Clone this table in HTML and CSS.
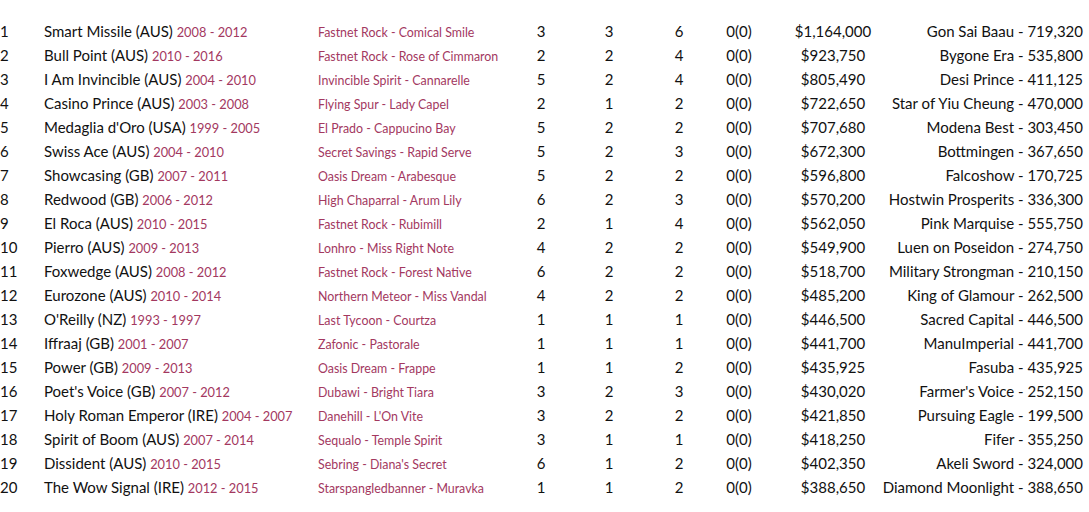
FILE: index.html
```html
<!DOCTYPE html>
<html lang="en">
<head>
<meta charset="utf-8">
<title>Leading Sires</title>
<link rel="stylesheet" href="styles.css">
</head>
<body>
<div class="table">
  <div class="row"><div class="rank">1</div><div class="name">Smart Missile (AUS) <span class="years">2008 - 2012</span></div><div class="sire">Fastnet Rock - Comical Smile</div><div class="num">3</div><div class="num">3</div><div class="num">6</div><div class="num">0(0)</div><div class="num">$1,164,000</div><div class="best"><span>Gon Sai Baau - 719,320</span></div></div>
  <div class="row"><div class="rank">2</div><div class="name">Bull Point (AUS) <span class="years">2010 - 2016</span></div><div class="sire">Fastnet Rock - Rose of Cimmaron</div><div class="num">2</div><div class="num">2</div><div class="num">4</div><div class="num">0(0)</div><div class="num">$923,750</div><div class="best"><span>Bygone Era - 535,800</span></div></div>
  <div class="row"><div class="rank">3</div><div class="name">I Am Invincible (AUS) <span class="years">2004 - 2010</span></div><div class="sire">Invincible Spirit - Cannarelle</div><div class="num">5</div><div class="num">2</div><div class="num">4</div><div class="num">0(0)</div><div class="num">$805,490</div><div class="best"><span>Desi Prince - 411,125</span></div></div>
  <div class="row"><div class="rank">4</div><div class="name">Casino Prince (AUS) <span class="years">2003 - 2008</span></div><div class="sire">Flying Spur - Lady Capel</div><div class="num">2</div><div class="num">1</div><div class="num">2</div><div class="num">0(0)</div><div class="num">$722,650</div><div class="best"><span>Star of Yiu Cheung - 470,000</span></div></div>
  <div class="row"><div class="rank">5</div><div class="name">Medaglia d'Oro (USA) <span class="years">1999 - 2005</span></div><div class="sire">El Prado - Cappucino Bay</div><div class="num">5</div><div class="num">2</div><div class="num">2</div><div class="num">0(0)</div><div class="num">$707,680</div><div class="best"><span>Modena Best - 303,450</span></div></div>
  <div class="row"><div class="rank">6</div><div class="name">Swiss Ace (AUS) <span class="years">2004 - 2010</span></div><div class="sire">Secret Savings - Rapid Serve</div><div class="num">5</div><div class="num">2</div><div class="num">3</div><div class="num">0(0)</div><div class="num">$672,300</div><div class="best"><span>Bottmingen - 367,650</span></div></div>
  <div class="row"><div class="rank">7</div><div class="name">Showcasing (GB) <span class="years">2007 - 2011</span></div><div class="sire">Oasis Dream - Arabesque</div><div class="num">5</div><div class="num">2</div><div class="num">2</div><div class="num">0(0)</div><div class="num">$596,800</div><div class="best"><span>Falcoshow - 170,725</span></div></div>
  <div class="row"><div class="rank">8</div><div class="name">Redwood (GB) <span class="years">2006 - 2012</span></div><div class="sire">High Chaparral - Arum Lily</div><div class="num">6</div><div class="num">2</div><div class="num">3</div><div class="num">0(0)</div><div class="num">$570,200</div><div class="best"><span>Hostwin Prosperits - 336,300</span></div></div>
  <div class="row"><div class="rank">9</div><div class="name">El Roca (AUS) <span class="years">2010 - 2015</span></div><div class="sire">Fastnet Rock - Rubimill</div><div class="num">2</div><div class="num">1</div><div class="num">4</div><div class="num">0(0)</div><div class="num">$562,050</div><div class="best"><span>Pink Marquise - 555,750</span></div></div>
  <div class="row"><div class="rank">10</div><div class="name">Pierro (AUS) <span class="years">2009 - 2013</span></div><div class="sire">Lonhro - Miss Right Note</div><div class="num">4</div><div class="num">2</div><div class="num">2</div><div class="num">0(0)</div><div class="num">$549,900</div><div class="best"><span>Luen on Poseidon - 274,750</span></div></div>
  <div class="row"><div class="rank">11</div><div class="name">Foxwedge (AUS) <span class="years">2008 - 2012</span></div><div class="sire">Fastnet Rock - Forest Native</div><div class="num">6</div><div class="num">2</div><div class="num">2</div><div class="num">0(0)</div><div class="num">$518,700</div><div class="best"><span>Military Strongman - 210,150</span></div></div>
  <div class="row"><div class="rank">12</div><div class="name">Eurozone (AUS) <span class="years">2010 - 2014</span></div><div class="sire">Northern Meteor - Miss Vandal</div><div class="num">4</div><div class="num">2</div><div class="num">2</div><div class="num">0(0)</div><div class="num">$485,200</div><div class="best"><span>King of Glamour - 262,500</span></div></div>
  <div class="row"><div class="rank">13</div><div class="name">O'Reilly (NZ) <span class="years">1993 - 1997</span></div><div class="sire">Last Tycoon - Courtza</div><div class="num">1</div><div class="num">1</div><div class="num">1</div><div class="num">0(0)</div><div class="num">$446,500</div><div class="best"><span>Sacred Capital - 446,500</span></div></div>
  <div class="row"><div class="rank">14</div><div class="name">Iffraaj (GB) <span class="years">2001 - 2007</span></div><div class="sire">Zafonic - Pastorale</div><div class="num">1</div><div class="num">1</div><div class="num">1</div><div class="num">0(0)</div><div class="num">$441,700</div><div class="best"><span>ManuImperial - 441,700</span></div></div>
  <div class="row"><div class="rank">15</div><div class="name">Power (GB) <span class="years">2009 - 2013</span></div><div class="sire">Oasis Dream - Frappe</div><div class="num">1</div><div class="num">1</div><div class="num">2</div><div class="num">0(0)</div><div class="num">$435,925</div><div class="best"><span>Fasuba - 435,925</span></div></div>
  <div class="row"><div class="rank">16</div><div class="name">Poet's Voice (GB) <span class="years">2007 - 2012</span></div><div class="sire">Dubawi - Bright Tiara</div><div class="num">3</div><div class="num">2</div><div class="num">3</div><div class="num">0(0)</div><div class="num">$430,020</div><div class="best"><span>Farmer's Voice - 252,150</span></div></div>
  <div class="row"><div class="rank">17</div><div class="name">Holy Roman Emperor (IRE) <span class="years">2004 - 2007</span></div><div class="sire">Danehill - L'On Vite</div><div class="num">3</div><div class="num">2</div><div class="num">2</div><div class="num">0(0)</div><div class="num">$421,850</div><div class="best"><span>Pursuing Eagle - 199,500</span></div></div>
  <div class="row"><div class="rank">18</div><div class="name">Spirit of Boom (AUS) <span class="years">2007 - 2014</span></div><div class="sire">Sequalo - Temple Spirit</div><div class="num">3</div><div class="num">1</div><div class="num">1</div><div class="num">0(0)</div><div class="num">$418,250</div><div class="best"><span>Fifer - 355,250</span></div></div>
  <div class="row"><div class="rank">19</div><div class="name">Dissident (AUS) <span class="years">2010 - 2015</span></div><div class="sire">Sebring - Diana's Secret</div><div class="num">6</div><div class="num">1</div><div class="num">2</div><div class="num">0(0)</div><div class="num">$402,350</div><div class="best"><span>Akeli Sword - 324,000</span></div></div>
  <div class="row"><div class="rank">20</div><div class="name">The Wow Signal (IRE) <span class="years">2012 - 2015</span></div><div class="sire">Starspangledbanner - Muravka</div><div class="num">1</div><div class="num">1</div><div class="num">2</div><div class="num">0(0)</div><div class="num">$388,650</div><div class="best"><span>Diamond Moonlight - 388,650</span></div></div>
</div>
</body>
</html>
```

FILE: styles.css
```css
html, body {
  margin: 0;
  padding: 0;
  background: #ffffff;
}

body {
  font-family: "Lato", "Liberation Sans", sans-serif;
  color: #111111;
  font-size: 15px;
}

.table {
  padding-top: 19px;
  padding-right: 6px;
}

.row {
  display: grid;
  grid-template-columns: 44px 274px 192px 62px 74px 66px 54px 134px 1fr;
  height: 24px;
  align-items: baseline;
  line-height: 24px;
  white-space: nowrap;
}

.rank {
  text-align: left;
}

.years {
  font-size: 12.8px;
  color: #a3385f;
}

.sire {
  font-size: 12.4px;
  color: #a3385f;
}

.num {
  text-align: center;
}

.best {
  display: flex;
  justify-content: flex-end;
  min-width: 0;
}
```
